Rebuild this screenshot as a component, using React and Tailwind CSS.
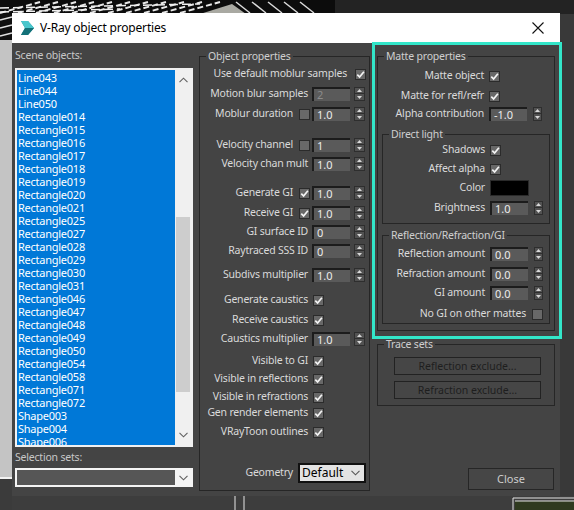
import React from 'react'

const objects = [
  'Line043', 'Line044', 'Line050',
  'Rectangle014', 'Rectangle015', 'Rectangle016', 'Rectangle017', 'Rectangle018', 'Rectangle019',
  'Rectangle020', 'Rectangle021', 'Rectangle025', 'Rectangle027', 'Rectangle028', 'Rectangle029',
  'Rectangle030', 'Rectangle031', 'Rectangle046', 'Rectangle047', 'Rectangle048', 'Rectangle049',
  'Rectangle050', 'Rectangle054', 'Rectangle058', 'Rectangle071', 'Rectangle072',
  'Shape003', 'Shape004', 'Shape006',
]

const objectRows = [
  { label: 'Use default moblur samples', kind: 'end', on: true, mt: 'mt-[3px]' },
  { label: 'Motion blur samples', kind: 'num', value: '2', dim: true, mt: 'mt-[4px]' },
  { label: 'Moblur duration', kind: 'checknum', on: false, value: '1.0', mt: 'mt-[4px]' },
  { label: 'Velocity channel', kind: 'checknum', on: false, value: '1', mt: 'mt-[15px]' },
  { label: 'Velocity chan mult', kind: 'num', value: '1.0', mt: 'mt-[3px]' },
  { label: 'Generate GI', kind: 'checknum', on: true, value: '1.0', mt: 'mt-[13px]' },
  { label: 'Receive GI', kind: 'checknum', on: true, value: '1.0', mt: 'mt-[4px]' },
  { label: 'GI surface ID', kind: 'num', value: '0', mt: 'mt-[3px]' },
  { label: 'Raytraced SSS ID', kind: 'num', value: '0', mt: 'mt-[3px]' },
  { label: 'Subdivs multiplier', kind: 'num', value: '1.0', mt: 'mt-[8px]' },
  { label: 'Generate caustics', kind: 'check', on: true, mt: 'mt-[9px]' },
  { label: 'Receive caustics', kind: 'check', on: true, mt: 'mt-[4px]' },
  { label: 'Caustics multiplier', kind: 'num', value: '1.0', mt: 'mt-[3px]' },
  { label: 'Visible to GI', kind: 'check', on: true, mt: 'mt-[6px]' },
  { label: 'Visible in reflections', kind: 'check', on: true, mt: 'mt-[2px]' },
  { label: 'Visible in refractions', kind: 'check', on: true, mt: 'mt-[2px]' },
  { label: 'Gen render elements', kind: 'check', on: true, mt: 'mt-0' },
  { label: 'VRayToon outlines', kind: 'check', on: true, mt: 'mt-[3px]' },
]

function Check({ on }) {
  return (
    <span className="flex h-[11px] w-[11px] shrink-0 items-center justify-center border border-[#2b2b2b] bg-[#686868]">
      {on && (
        <svg width="9" height="9" viewBox="0 0 9 9">
          <path d="M1.3 4.6 L3.6 7 L7.9 1.7" fill="none" stroke="#f4f4f4" strokeWidth="1.7" />
        </svg>
      )}
    </span>
  )
}

function Spin({ narrow }) {
  return (
    <div className={`flex h-[14px] shrink-0 flex-col ${narrow ? 'ml-[6px] w-[9px]' : 'ml-[4px] w-[11px]'}`}>
      <div className="flex h-[7px] items-center justify-center border border-[#2e2e2e] bg-[#525252]">
        <svg width="5" height="3" viewBox="0 0 5 3"><path d="M0 3 L2.5 0 L5 3 Z" fill="#d8d8d8" /></svg>
      </div>
      <div className="flex h-[7px] items-center justify-center border border-t-0 border-[#2e2e2e] bg-[#525252]">
        <svg width="5" height="3" viewBox="0 0 5 3"><path d="M0 0 L2.5 3 L5 0 Z" fill="#d8d8d8" /></svg>
      </div>
    </div>
  )
}

function Num({ value, dim, narrow }) {
  return (
    <div className="flex items-center">
      <div className={`h-[14px] w-[38px] border-l-2 border-t-2 border-[#1c1c1c] bg-[#5a5a5a] pl-[3px] text-[11px] leading-[12px] ${dim ? 'text-[#8c8c8c]' : 'text-[#ececec]'}`}>
        {value}
      </div>
      <Spin narrow={narrow} />
    </div>
  )
}

function Group({ title, className, children }) {
  return (
    <fieldset className={`border border-[#262626] ${className}`}>
      <legend className="ml-[6px] px-[2px] text-[10.5px] leading-[14px] tracking-[-0.2px] text-[#cfcfcf]">{title}</legend>
      {children}
    </fieldset>
  )
}

function Label({ children, className = '' }) {
  return (
    <span className={`whitespace-nowrap text-[10.5px] tracking-[-0.2px] text-[#dadada] ${className}`}>{children}</span>
  )
}

function ObjectRow({ row }) {
  return (
    <div className={`flex h-[16px] items-center justify-end pr-[3px] ${row.mt}`}>
      <Label>{row.label}</Label>
      {row.kind === 'end' && <span className="ml-[8px]"><Check on={row.on} /></span>}
      {row.kind === 'num' && (
        <div className="ml-[4px] w-[54px]"><Num value={row.value} dim={row.dim} /></div>
      )}
      {row.kind === 'checknum' && (
        <>
          <span className="ml-[6px]"><Check on={row.on} /></span>
          <div className="ml-[2px] w-[54px]"><Num value={row.value} /></div>
        </>
      )}
      {row.kind === 'check' && (
        <div className="ml-[4px] w-[54px] pl-[1px]"><Check on={row.on} /></div>
      )}
    </div>
  )
}

function MatteRow({ label, mt, pr, children }) {
  return (
    <div className={`flex h-[16px] items-center justify-end ${mt} ${pr}`}>
      <Label className="mr-[5px]">{label}</Label>
      <div className="flex w-[54px]">{children}</div>
    </div>
  )
}

function Chevron({ color = '#606060' }) {
  return (
    <svg width="9" height="6" viewBox="0 0 9 6">
      <path d="M0.5 0.8 L4.5 4.8 L8.5 0.8" fill="none" stroke={color} strokeWidth="1.1" />
    </svg>
  )
}

function Backdrop() {
  return (
    <svg className="absolute inset-0" width="574" height="510" viewBox="0 0 574 510">
      <rect width="574" height="510" fill="#2b2b2b" />
      <rect x="0" y="0" width="335" height="14" fill="#0c0c0c" />
      {[0, 18, 36, 54, 72, 90, 108, 126, 144, 162, 180].map(x => (
        <path key={x} d={`M${x} 13 L${x + 40} 2`} stroke="#e8e8e8" strokeWidth="2" strokeDasharray="6 3" />
      ))}
      <path d="M0 8 L200 4 M0 12 L120 9" stroke="#f0f0f0" strokeWidth="1.5" strokeDasharray="9 4" />
      <path d="M200 14 L232 4 L246 14 Z" fill="#a9a9a2" />
      {[236, 252, 268, 284, 300].map(x => (
        <path key={x} d={`M${x} 2 L${x + 14} 13`} stroke="#dcdcdc" strokeWidth="1.5" />
      ))}
      <rect x="0" y="14" width="12" height="26" fill="#101010" />
      <path d="M0 20 L12 17 M0 28 L12 25 M0 36 L12 33" stroke="#e0e0e0" strokeWidth="1.5" />
      <rect x="0" y="40" width="12" height="437" fill="#c4c4c4" />
      <rect x="0" y="477" width="12" height="2" fill="#f2f2f2" />
      <rect x="0" y="479" width="12" height="31" fill="#3b3b3b" />
      <rect x="12" y="496" width="562" height="14" fill="#3d3d3d" />
      <rect x="560" y="14" width="14" height="482" fill="#393939" />
      <rect x="335" y="0" width="239" height="14" fill="#232323" />
      <path d="M235 496 L235 510 M244 496 L244 510" stroke="#e8e8e8" strokeWidth="1" />
      <rect x="515" y="501" width="59" height="9" fill="#2f3a1f" />
      <path d="M513 510 L513 498 L574 498 M515 501 L574 501" stroke="#e6e6e6" strokeWidth="1" fill="none" />
    </svg>
  )
}

export default function App() {
  return (
    <div className="relative h-[510px] w-[574px] overflow-hidden font-['Noto_Sans',sans-serif]">
      <Backdrop />

      <div className="absolute left-[12px] top-[13px] flex h-[483px] w-[548px] flex-col">
        <div className="flex h-[30px] shrink-0 items-center bg-white">
          <svg className="ml-[8px]" width="15" height="16" viewBox="0 0 15 16">
            <path d="M1 1 L8 1 L14 8 L8 15 L1 15 L5 8 Z" fill="#1c8f96" />
            <path d="M5 8 L1 1 L8 1 L14 8 Z" fill="#49c6cc" />
            <path d="M5 8 L14 8 L8 15 L1 15 Z" fill="#137178" />
          </svg>
          <span className="ml-[5px] text-[12px] tracking-[-0.2px] text-black">V-Ray object properties</span>
          <svg className="ml-auto mr-[16px]" width="12" height="12" viewBox="0 0 12 12">
            <path d="M0.5 0.5 L11.5 11.5 M11.5 0.5 L0.5 11.5" stroke="#111" strokeWidth="1.1" />
          </svg>
        </div>

        <div className="flex flex-1 bg-[#444444] pl-[3px]">
          {/* scene list */}
          <div className="flex w-[178px] flex-col">
            <div className="mt-[5px] h-[14px] text-[10.5px] leading-[14px] tracking-[-0.2px] text-[#c8c8c8]">Scene objects:</div>
            <div className="mt-[6px] flex h-[379px] border-2 border-[#f0f0f0]">
              <div className="flex-1 overflow-hidden bg-[#0078d7] pt-[1px]">
                {objects.map(o => (
                  <div key={o} className="h-[13px] pl-[1px] text-[11px] leading-[13px] tracking-[-0.25px] text-white">{o}</div>
                ))}
              </div>
              <div className="flex w-[16px] flex-col items-center bg-[#f0f0f0]">
                <div className="mt-[7px] rotate-180"><Chevron /></div>
                <div className="mt-[134px] h-[175px] w-[14px] bg-[#cdcdcd]" />
                <div className="mt-[40px]"><Chevron /></div>
              </div>
            </div>
            <div className="mt-[3px] h-[14px] text-[10.5px] leading-[14px] tracking-[-0.2px] text-[#c8c8c8]">Selection sets:</div>
            <div className="mt-[4px] flex h-[19px] border-2 border-[#f4f4f4]">
              <div className="flex-1 bg-[#565656]" />
              <div className="flex w-[16px] items-center justify-center bg-[#f4f4f4]"><Chevron /></div>
            </div>
          </div>

          {/* object properties */}
          <Group title="Object properties" className="ml-[6px] mt-[6px] h-[442px] w-[171px]">
            {objectRows.map(r => <ObjectRow key={r.label} row={r} />)}
            <div className="mt-[23px] flex h-[20px] items-center justify-end pr-[3px]">
              <Label className="text-[#d2d2d2]">Geometry</Label>
              <div className="ml-[5px] flex h-[20px] w-[68px] items-center border-2 border-[#111] bg-[#e3e3e3] pl-[2px] pr-[4px]">
                <span className="text-[12px] text-black">Default</span>
                <span className="ml-auto"><Chevron color="#555" /></span>
              </div>
            </div>
          </Group>

          {/* right column */}
          <div className="ml-[7px] flex w-[178px] flex-col">
            <Group title="Matte properties" className="mt-[6px] pb-[6px]">
              <MatteRow label="Matte object" mt="mt-[5px]" pr="pr-[11px]"><Check on /></MatteRow>
              <MatteRow label="Matte for refl/refr" mt="mt-[4px]" pr="pr-[11px]"><Check on /></MatteRow>
              <MatteRow label="Alpha contribution" mt="mt-[2px]" pr="pr-[11px]"><Num value="-1.0" narrow /></MatteRow>

              <Group title="Direct light" className="ml-[4px] mt-[5px] w-[168px] pb-[7px]">
                <MatteRow label="Shadows" mt="mt-[1px]" pr="pr-[5px]"><Check on /></MatteRow>
                <MatteRow label="Affect alpha" mt="mt-[3px]" pr="pr-[5px]"><Check on /></MatteRow>
                <MatteRow label="Color" mt="mt-[3px]" pr="pr-[5px]">
                  <div className="h-[16px] w-[39px] border border-[#2a2a2a] bg-black" />
                </MatteRow>
                <MatteRow label="Brightness" mt="mt-[4px]" pr="pr-[5px]"><Num value="1.0" narrow /></MatteRow>
              </Group>

              <Group title="Reflection/Refraction/GI" className="ml-[4px] mt-[4px] w-[168px] pb-[1px]">
                <MatteRow label="Reflection amount" mt="mt-[4px]" pr="pr-[5px]"><Num value="0.0" narrow /></MatteRow>
                <MatteRow label="Refraction amount" mt="mt-[4px]" pr="pr-[5px]"><Num value="0.0" narrow /></MatteRow>
                <MatteRow label="GI amount" mt="mt-[3px]" pr="pr-[5px]"><Num value="0.0" narrow /></MatteRow>
                <div className="mt-[5px] flex h-[16px] items-center justify-end pr-[6px]">
                  <Label className="mr-[6px]">No GI on other mattes</Label>
                  <Check on={false} />
                </div>
              </Group>
            </Group>

            <Group title="Trace sets" className="mt-[6px] pb-[6px]">
              <button className="ml-[16px] mt-[6px] block h-[18px] w-[147px] border border-[#222] bg-[#464646] text-[10.5px] leading-[16px] text-[#1e1e1e]">
                Reflection exclude...
              </button>
              <button className="ml-[16px] mt-[6px] block h-[18px] w-[147px] border border-[#222] bg-[#464646] text-[10.5px] leading-[16px] text-[#1e1e1e]">
                Refraction exclude...
              </button>
            </Group>

            <button className="ml-[91px] mt-[62px] h-[22px] w-[86px] border border-[#262626] bg-[#464646] text-[11px] text-[#cccccc]">
              Close
            </button>
          </div>
        </div>
      </div>

      {/* highlight frame drawn over the dialog */}
      <div className="pointer-events-none absolute left-[372px] top-[42px] h-[297px] w-[190px] border-[3px] border-[#33e6c9]" />
    </div>
  )
}
